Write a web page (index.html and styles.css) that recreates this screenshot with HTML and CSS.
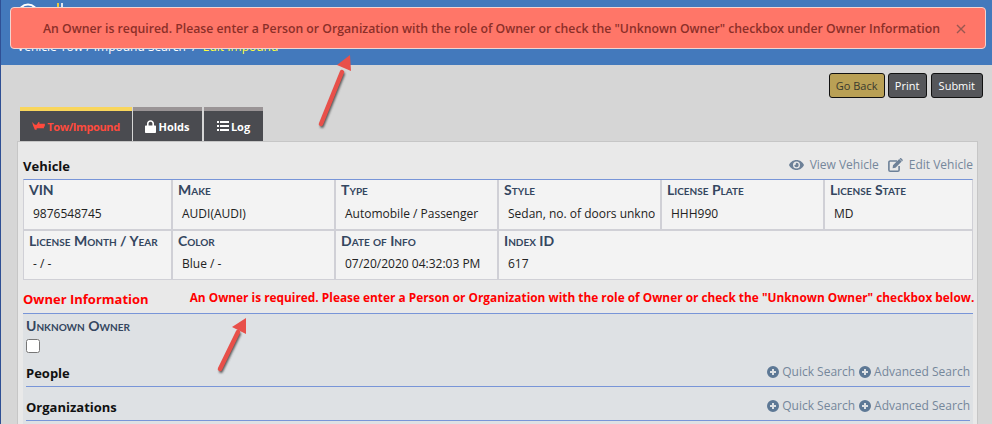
FILE: index.html
```html
<!DOCTYPE html>
<html lang="en">
<head>
<meta charset="utf-8">
<title>Edit Impound</title>
<link rel="stylesheet" href="styles.css">
</head>
<body>
<div class="page">
  <header class="topbar">
    <div class="brand">
      <svg class="logo" width="22" height="22" viewBox="0 0 22 22"><circle cx="11" cy="11" r="9.5" fill="none" stroke="#fff" stroke-width="2"/></svg>
      <svg class="brand-mark" width="8" height="6" viewBox="0 0 8 6"><rect x="0" y="0" width="2" height="6" fill="#e8c840"/><rect x="4" y="0" width="2" height="6" fill="#dfe6f0"/></svg>
    </div>
    <nav class="crumbs">Vehicle Tow / Impound Search&nbsp; /&nbsp; <span class="crumb-current">Edit Impound</span></nav>
  </header>

  <div class="alert">
    <span class="alert-text">An Owner is required. Please enter a Person or Organization with the role of Owner or check the "Unknown Owner" checkbox under Owner Information</span>
    <svg class="alert-close" width="10" height="10" viewBox="0 0 10 10"><path d="M1 1l8 8M9 1l-8 8" stroke="#9a5750" stroke-width="1.4" fill="none"/></svg>
  </div>

  <div class="toolbar">
    <button class="btn btn-gold">Go Back</button>
    <button class="btn btn-print">Print</button>
    <button class="btn">Submit</button>
  </div>

  <div class="tabs">
    <div class="tab tab-active tab-tow">
      <svg width="13" height="10" viewBox="0 0 14 11"><path fill="#ff4a3d" d="M0 1l3 3h2l2-3h1v2h6v3h-1v2H5v1.500H3L1 5z"/></svg>
      <span>Tow/Impound</span>
    </div>
    <div class="tab tab-holds">
      <svg width="11" height="13" viewBox="0 0 11 13"><path fill="#fff" d="M1 5.500h1V3.600C2 1.600 3.500.200 5.500.200S9 1.600 9 3.600v1.900h1c.6 0 1 .4 1 1V12c0 .6-.4 1-1 1H1c-.6 0-1-.4-1-1V6.500c0-.6.4-1 1-1zM3.600 5.500h3.800V3.600c0-1.100-.8-1.900-1.900-1.900s-1.900.8-1.900 1.900z"/></svg>
      <span>Holds</span>
    </div>
    <div class="tab tab-log">
      <svg width="12" height="10" viewBox="0 0 12 10"><path fill="#fff" d="M0 0h2v2H0zM3 0h9v2H3zM0 4h2v2H0zM3 4h9v2H3zM0 8h2v2H0zM3 8h9v2H3z"/></svg>
      <span>Log</span>
    </div>
  </div>

  <main class="panel">
    <div class="head-row">
      <h2 class="head">Vehicle</h2>
      <div class="actions actions-vehicle">
        <a class="action">
          <svg width="15" height="10" viewBox="0 0 15 10"><path fill="#6d8198" fill-rule="evenodd" d="M7.500 0C11 0 13.800 2.300 15 5c-1.200 2.700-4 5-7.500 5S1.200 7.700 0 5C1.200 2.300 4 0 7.500 0zm0 1.500a3.500 3.500 0 1 0 0 7 3.500 3.500 0 0 0 0-7zm0 1.300a2.200 2.200 0 1 1-2.200 2.200c.9.400 1.900-.6 1.500-1.500.2-.5.400-.7.700-.7z"/></svg>
          View Vehicle
        </a>
        <a class="action">
          <svg width="15" height="14" viewBox="0 0 15 14"><path fill="none" stroke="#6d8198" stroke-width="1.600" d="M9 3H2.200C1.500 3 .9 3.500.9 4.300v7.600c0 .7.600 1.300 1.300 1.300h7.600c.8 0 1.300-.6 1.300-1.300V8"/><path fill="#6d8198" d="M5 7.300L11.200 1.100l2.500 2.500L7.500 9.800 4.600 10.300zM12 .4c.4-.4 1-.4 1.400 0l1.100 1.100c.4.400.4 1 0 1.400l-.4.400-2.500-2.500z"/></svg>
          Edit Vehicle
        </a>
      </div>
    </div>

    <div class="grid">
      <div class="cell"><div class="label">VIN</div><div class="value">9876548745</div></div>
      <div class="cell"><div class="label">Make</div><div class="value">AUDI(AUDI)</div></div>
      <div class="cell"><div class="label">Type</div><div class="value">Automobile / Passenger</div></div>
      <div class="cell"><div class="label">Style</div><div class="value">Sedan, no. of doors unknown</div></div>
      <div class="cell"><div class="label">License Plate</div><div class="value">HHH990</div></div>
      <div class="cell"><div class="label">License State</div><div class="value">MD</div></div>
      <div class="cell"><div class="label">License Month / Year</div><div class="value">- / -</div></div>
      <div class="cell"><div class="label">Color</div><div class="value">Blue / -</div></div>
      <div class="cell"><div class="label">Date of Info</div><div class="value">07/20/2020 04:32:03 PM</div></div>
      <div class="cell cell-wide"><div class="label">Index ID</div><div class="value">617</div></div>
    </div>

    <div class="owner-row">
      <h2 class="owner-head">Owner Information</h2>
      <div class="owner-msg">An Owner is required. Please enter a Person or Organization with the role of Owner or check the "Unknown Owner" checkbox below.</div>
    </div>

    <section class="owner">
      <div class="owner-label">Unknown Owner</div>
      <input class="check" type="checkbox">
      <div class="sub-row">
        <h3 class="sub">People</h3>
        <div class="actions">
          <a class="action"><svg width="12" height="12" viewBox="0 0 12 12"><path fill="#5d7895" fill-rule="evenodd" d="M6 0a6 6 0 1 1 0 12A6 6 0 0 1 6 0zM5 3v2H3v2h2v2h2V7h2V5H7V3z"/></svg>Quick Search</a>
          <a class="action"><svg width="12" height="12" viewBox="0 0 12 12"><path fill="#5d7895" fill-rule="evenodd" d="M6 0a6 6 0 1 1 0 12A6 6 0 0 1 6 0zM5 3v2H3v2h2v2h2V7h2V5H7V3z"/></svg>Advanced Search</a>
        </div>
      </div>
      <div class="sub-row">
        <h3 class="sub">Organizations</h3>
        <div class="actions">
          <a class="action"><svg width="12" height="12" viewBox="0 0 12 12"><path fill="#5d7895" fill-rule="evenodd" d="M6 0a6 6 0 1 1 0 12A6 6 0 0 1 6 0zM5 3v2H3v2h2v2h2V7h2V5H7V3z"/></svg>Quick Search</a>
          <a class="action"><svg width="12" height="12" viewBox="0 0 12 12"><path fill="#5d7895" fill-rule="evenodd" d="M6 0a6 6 0 1 1 0 12A6 6 0 0 1 6 0zM5 3v2H3v2h2v2h2V7h2V5H7V3z"/></svg>Advanced Search</a>
        </div>
      </div>
    </section>
  </main>

  <svg class="arrows" width="992" height="424" viewBox="0 0 992 424">
    <defs>
      <filter id="blur" x="-30%" y="-30%" width="160%" height="160%"><feGaussianBlur stdDeviation="1.200"/></filter>
    </defs>
    <g filter="url(#blur)">
      <path d="M322 126L343 74" stroke="#555" stroke-width="4" stroke-linecap="round" fill="none"/>
      <path d="M221 371L239 334" stroke="#555" stroke-width="4" stroke-linecap="round" fill="none"/>
    </g>
    <path d="M321 124L342 72" stroke="#e8504a" stroke-width="4.500" stroke-linecap="round" fill="none"/>
    <path d="M350 55L351 71 337 65z" fill="#e8504a"/>
    <path d="M220 369L238 332" stroke="#e8504a" stroke-width="4.500" stroke-linecap="round" fill="none"/>
    <path d="M246 318L246 334 232 327z" fill="#e8504a"/>
  </svg>
</div>
</body>
</html>
```

FILE: styles.css
```css
* { box-sizing: border-box; }
html, body { margin: 0; padding: 0; height: 100%; overflow: hidden; }
body { background: #d6d6d6; font-family: "Open Sans", "Noto Sans", sans-serif; color: #222; }
.page { position: relative; width: 992px; height: 424px; overflow: hidden; border-left: 1px solid #2f4f94; }

.topbar { height: 65px; background: #4379bc; padding: 3px 0 0 16px; }
.brand { display: flex; align-items: flex-start; height: 35px; gap: 18px; }
.crumbs { font-size: 12px; line-height: 18px; color: #fff; }
.crumb-current { color: #ffff3c; }

.alert { position: absolute; left: 9px; top: 7px; width: 976px; height: 42px; display: flex; align-items: center; justify-content: space-between; padding: 0 19px 0 32px; background: #ff7668; border: 1px solid #f3d4cf; border-radius: 4px; }
.alert-text { font-size: 12.250px; font-weight: 600; color: #8c2f28; white-space: nowrap; }
.alert-close { margin-top: 2px; }

.toolbar { display: flex; justify-content: flex-end; gap: 4px; padding: 8px 9px 0 0; height: 42px; }
.btn { height: 25px; padding: 0 7px; font-family: "Open Sans", sans-serif; font-size: 11px; color: #fff; background: #55565a; border: 1px solid #111; border-radius: 3px; }
.btn-gold { background: #b9a055; color: #3a3a2e; width: 56px; padding: 0; margin-right: -1px; }
.btn-print { width: 39px; padding: 0; }

.tabs { display: flex; gap: 1px; padding-left: 19px; height: 34px; }
.tab { display: flex; align-items: center; justify-content: center; gap: 2px; background: #4a4b50; border-top: 4px solid #9a9496; font-size: 11px; font-weight: 700; color: #fff; font-family: "Open Sans", sans-serif; }
.tab-tow { width: 112px; letter-spacing: -0.400px; }
.tab-holds { width: 69px; }
.tab-log { width: 59px; margin-left: 1px; }
.tab-active { border-top-color: #f9d65c; color: #ff4a3d; }

.panel { width: 961px; height: 290px; margin-left: 16px; padding: 12px 5px 0; background: #e9e9e9; border: 1px solid #c6c6c6; border-bottom: 0; }

.head-row { display: flex; align-items: center; justify-content: space-between; height: 25px; }
.head { margin: 0 0 2px; font-size: 13px; font-weight: 700; color: #111; }
.actions { display: flex; gap: 4px; margin-bottom: 2px; }
.actions-vehicle { gap: 9px; margin: 0 -1px 4px 0; }
.action { display: flex; align-items: center; gap: 3px; font-size: 12px; color: #75879b; }
.actions-vehicle .action { gap: 6px; }

.grid { display: grid; grid-template-columns: 147px 161px 161px 161px 161px 147px; grid-template-rows: 49px 48px; gap: 2px; width: 950px; background: #d0d0d6; border: 1px solid #d0d0d6; border-top: 1px solid #7895d8; }
.cell { padding: 1px 5px 0; background: #f3f3f3; overflow: hidden; }
.cell:nth-child(-n+6) .value { padding-top: 6px; }
.cell-wide { grid-column: span 3; }
.label { font-family: Lato, sans-serif; font-variant: small-caps; font-weight: 700; font-size: 14px; line-height: 18px; color: #34465f; white-space: nowrap; }
.value { padding: 5px 0 0 4px; font-size: 12px; line-height: 18px; color: #222; white-space: nowrap; overflow: hidden; }

.owner-row { display: flex; align-items: center; gap: 41px; height: 33px; }
.owner-head { margin: 0; flex-shrink: 0; font-size: 13px; font-weight: 700; color: #f00; padding-top: 4px; white-space: nowrap; }
.owner-msg { font-size: 11.860px; font-weight: 700; color: #f00; white-space: nowrap; padding-top: 1px; }

.owner { width: 950px; height: 120px; padding: 3px 3px 0; background: #dee1e4; border-top: 1px solid #7895d8; }
.owner-label { font-family: Lato, sans-serif; font-variant: small-caps; font-weight: 700; font-size: 14px; line-height: 18px; color: #34465f; }
.check { display: block; width: 14px; height: 14px; margin: 4px 0 0; }
.sub-row { display: flex; align-items: flex-end; justify-content: space-between; height: 34px; padding-bottom: 4px; border-bottom: 1px solid #7895d8; }
.sub { margin: 0; font-size: 13px; font-weight: 700; color: #111; }

.arrows { position: absolute; left: -1px; top: 0; pointer-events: none; }
```
